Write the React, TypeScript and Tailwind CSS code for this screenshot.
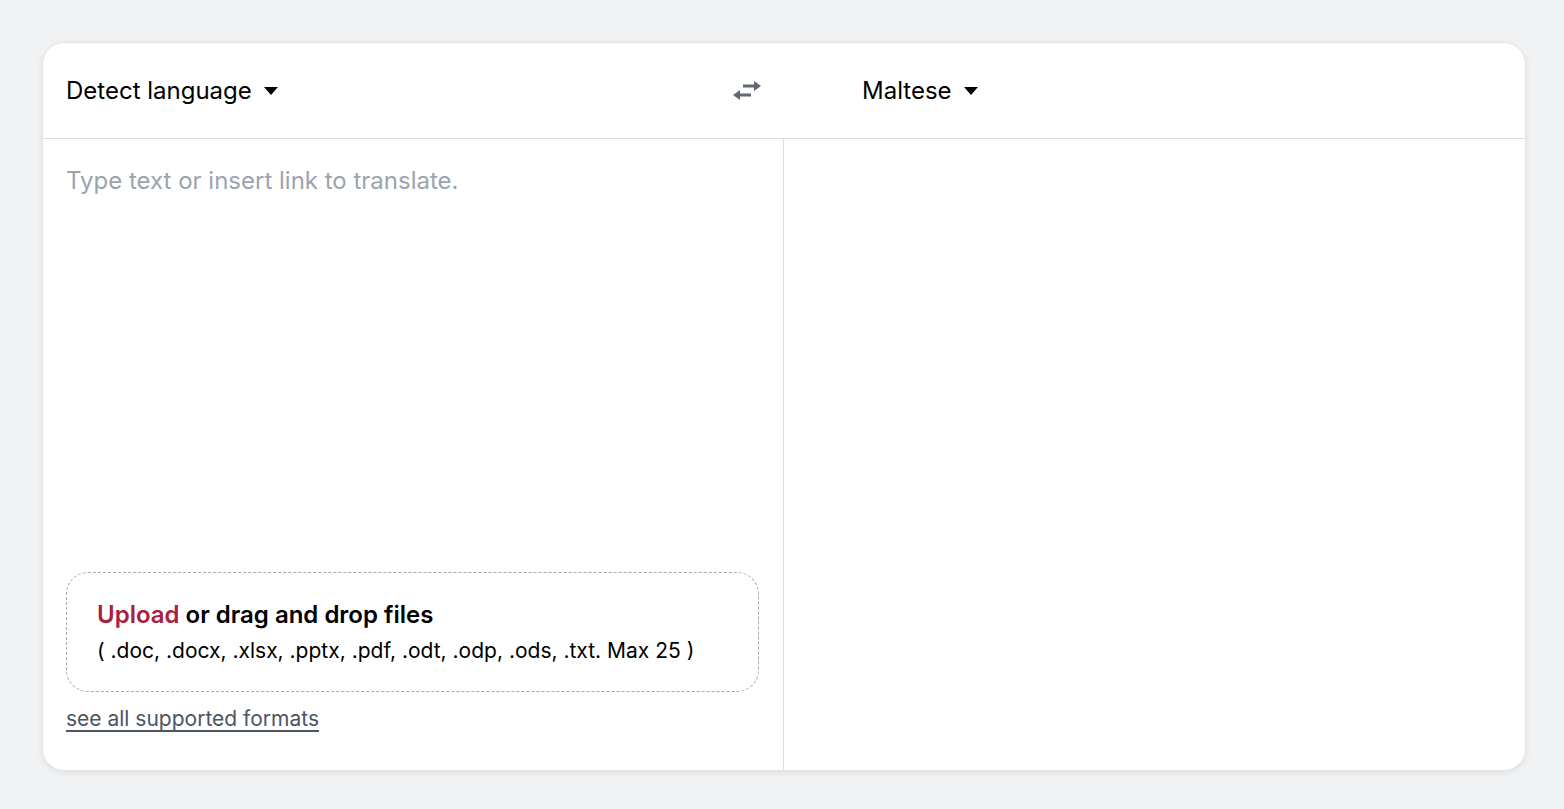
import React from 'react';

const Caret: React.FC = () => (
  <svg width="14" height="8" viewBox="0 0 14 8" className="ml-3">
    <path d="M0 0h14L7 8z" fill="#000" />
  </svg>
);

const SwapIcon: React.FC = () => (
  <svg width="30" height="22" viewBox="0 0 30 22">
    <path d="M11 7h12" stroke="#5f6873" strokeWidth="3" />
    <path d="M22 2l7 5-7 5z" fill="#5f6873" />
    <path d="M19 16H7" stroke="#5f6873" strokeWidth="3" />
    <path d="M8 11l-7 5 7 5z" fill="#5f6873" />
  </svg>
);

const App: React.FC = () => {
  return (
    <div className="min-h-screen bg-[#f1f2f4] pl-[42px] pr-[38px] pt-[42px] font-['Inter',sans-serif]">
      <div className="bg-white rounded-[22px] border border-[#e3e4e6] shadow-[0_2px_6px_rgba(0,0,0,0.08)] h-[729px] flex flex-col overflow-hidden">
        {/* Header */}
        <div className="h-[96px] flex items-center border-b border-[#dcdde0] shrink-0">
          <div className="w-[741px] flex items-center pl-[23px] pr-[22px]">
            <button className="flex items-center text-[24px] text-black">
              Detect language
              <Caret />
            </button>
            <div className="ml-auto flex items-center -mt-[2px]">
              <SwapIcon />
            </div>
          </div>
          <div className="flex-1 flex items-center pl-[78px]">
            <button className="flex items-center text-[24px] text-black">
              Maltese
              <Caret />
            </button>
          </div>
        </div>

        {/* Body */}
        <div className="flex flex-1">
          <div className="w-[741px] border-r border-[#dcdde0] flex flex-col pl-[23px] pr-[24px] pt-[27px] pb-[37px]">
            <div className="text-[24px] text-[#9ca3af] leading-[30px]">Type text or insert link to translate.</div>
            <div className="mt-auto border border-dashed border-[#a7aab1] rounded-[22px] h-[120px] flex flex-col justify-center pl-[30px]">
              <p className="text-[24px] font-semibold text-black leading-[30px]">
                <span className="text-[#a8213f]">Upload</span> or drag and drop files
              </p>
              <p className="text-[21px] text-black leading-[28px] mt-[7px]">
                ( .doc, .docx, .xlsx, .pptx, .pdf, .odt, .odp, .ods, .txt. Max 25 )
              </p>
            </div>
            <a href="#" className="mt-[13px] text-[21px] text-[#4b5563] underline underline-offset-[4px] leading-[28px] w-fit">
              see all supported formats
            </a>
          </div>
          <div className="flex-1" />
        </div>
      </div>
    </div>
  );
};

export default App;
